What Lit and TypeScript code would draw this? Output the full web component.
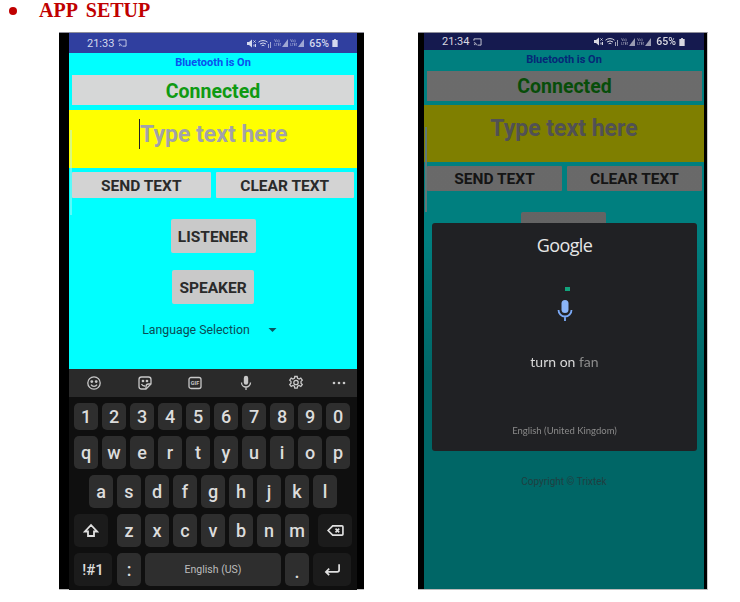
import { LitElement, html, css, svg } from "lit";
import { customElement, property } from "lit/decorators.js";

const castIcon = html`<svg class="cast" viewBox="0 0 10 9" width="9" height="8">
  <path d="M1 3V1h8v7H5M1 5.2A3 3 0 0 1 3.8 8M1 7a1 1 0 0 1 1 1" fill="none" stroke="currentColor" stroke-width="1"/>
</svg>`;

const muteIcon = html`<svg viewBox="0 0 9 9" width="9" height="9">
  <path d="M0 3h2l3-2.5v8L2 6H0z" fill="currentColor"/>
  <path d="M6.500 1.500 8.500 3.500M8.500 1.500 6.500 3.500M7 5.500v2M8.500 5v3" stroke="currentColor" stroke-width="1"/>
</svg>`;

const wifiIcon = html`<svg viewBox="0 0 14 9" width="14" height="9">
  <path d="M.5 3.200a7 7 0 0 1 9 0M2 5a5 5 0 0 1 6 0M3.600 6.700a2.400 2.400 0 0 1 2.800 0" fill="none" stroke="currentColor" stroke-width="1"/>
  <path d="M10 5h1v4h-1zM12 3h1v6h-1z" fill="currentColor" opacity=".7"/>
</svg>`;

const signalIcon = html`<span class="sig"><span class="volte">Vo)<br />LTE1</span>
  <svg viewBox="0 0 6 8" width="6" height="8"><path d="M6 0v8H0z" fill="currentColor" opacity=".8"/></svg></span>`;

const batteryIcon = html`<svg viewBox="0 0 6 9" width="6" height="8">
  <path d="M2 0h2v1h2v8H0V1h2z" fill="currentColor"/>
</svg>`;

const statusRight = html`<span class="status-right">
  ${muteIcon}${wifiIcon}${signalIcon}${signalIcon}<span class="pct">65%</span>${batteryIcon}
</span>`;

const toolbarIcons = [
  svg`<circle cx="8" cy="8" r="6.200"/><circle cx="5.800" cy="6.600" r=".8" fill="currentColor"/><circle cx="10.200" cy="6.600" r=".8" fill="currentColor"/><path d="M5 9.600a3.400 3.400 0 0 0 6 0"/>`,
  svg`<path d="M4.500 2h7A2.500 2.500 0 0 1 14 4.500V9l-5 5H4.500A2.500 2.500 0 0 1 2 11.500v-7A2.500 2.500 0 0 1 4.500 2z"/><path d="M9 14v-2.500A2.500 2.500 0 0 1 11.500 9H14"/><path d="M4.500 9a3.500 3.500 0 0 0 3.500 2"/><circle cx="6" cy="6" r=".7" fill="currentColor"/><circle cx="10" cy="6" r=".7" fill="currentColor"/>`,
  svg`<rect x="2" y="2.500" width="12" height="11" rx="2"/><text x="8" y="9.800" text-anchor="middle" font-size="5.500" font-weight="700" fill="currentColor" stroke="none">GIF</text>`,
  svg`<rect x="5.800" y=".8" width="4.400" height="9" rx="2.200" fill="currentColor" stroke="none"/><path d="M3.500 7.500a4.500 4.500 0 0 0 9 0M8 12v3"/>`,
  svg`<path d="M6.800 1.500h2.400l.4 1.900 1.500.7 1.700-1 1.500 2-1.300 1.300v1.800l1.300 1.300-1.500 2-1.700-1-1.500.7-.4 1.900H6.800l-.4-1.900-1.500-.7-1.700 1-1.500-2L3 8.200V6.400L1.700 5.100l1.500-2 1.700 1 1.500-.7z"/><circle cx="8" cy="7.500" r="2.200"/>`,
  svg`<circle cx="3" cy="8" r="1.300" fill="currentColor" stroke="none"/><circle cx="8" cy="8" r="1.300" fill="currentColor" stroke="none"/><circle cx="13" cy="8" r="1.300" fill="currentColor" stroke="none"/>`,
];

@customElement("phone-keyboard")
export class PhoneKeyboard extends LitElement {
  static styles = css`
    :host {
      display: block;
      font-family: Roboto, sans-serif;
    }

    .toolbar {
      height: 28px;
      background: #2a2a2a;
      color: #c9c9c9;
      display: grid;
      grid-template-columns: 50px 51px 50px 52px 48px 37px;
      align-items: center;
      justify-items: center;
    }

    .toolbar svg {
      width: 16px;
      height: 16px;
      fill: none;
      stroke: currentColor;
      stroke-width: 1.3;
    }

    .keys {
      background: #0f0f0f;
      height: 193px;
      box-sizing: border-box;
      padding: 6px 6px 0 5px;
      display: flex;
      flex-direction: column;
      gap: 6px;
    }

    .row {
      display: flex;
      gap: 4px;
      height: 33px;
    }

    .row.numbers {
      height: 27px;
    }

    .row.home {
      padding-left: 15px;
    }

    .key {
      flex: 0 0 24px;
      background: #2e2e2e;
      border-radius: 5px;
      color: #dcdcdc;
      font-size: 18px;
      font-weight: 500;
      display: flex;
      align-items: center;
      justify-content: center;
    }

    .key.dark {
      background: #1b1b1b;
    }

    .shift {
      flex-basis: 34px;
      margin-right: 5px;
    }

    .back {
      flex-basis: 34px;
      margin-left: 5px;
    }

    .sym {
      flex-basis: 38px;
      font-size: 15px;
      margin-right: 1px;
    }

    .space {
      flex-basis: 136px;
      font-size: 10.5px;
      font-weight: 400;
      color: #bdbdbd;
    }

    .enter {
      flex-basis: 38px;
    }

    .dot {
      align-items: flex-end;
      padding-bottom: 4px;
      box-sizing: border-box;
    }

    .key svg {
      fill: none;
      stroke: #e0e0e0;
      stroke-width: 1.8;
    }
  `;

  render() {
    const row = (chars: string) =>
      [...chars].map((c) => html`<div class="key">${c}</div>`);
    return html`
      <div class="toolbar">
        ${toolbarIcons.map((i) => html`<svg viewBox="0 0 16 16">${i}</svg>`)}
      </div>
      <div class="keys">
        <div class="row numbers">${row("1234567890")}</div>
        <div class="row">${row("qwertyuiop")}</div>
        <div class="row home">${row("asdfghjkl")}</div>
        <div class="row">
          <div class="key dark shift">
            <svg viewBox="0 0 16 16" width="16" height="16"><path d="M8 2 2 8.500h3V13h6V8.500h3z" /></svg>
          </div>
          ${row("zxcvbnm")}
          <div class="key dark back">
            <svg viewBox="0 0 18 14" width="17" height="13">
              <path d="M6 2h10a1 1 0 0 1 1 1v8a1 1 0 0 1-1 1H6L1 7z" />
              <path d="m9 5 4 4m0-4-4 4" />
            </svg>
          </div>
        </div>
        <div class="row">
          <div class="key dark sym">!#1</div>
          <div class="key">:</div>
          <div class="key space">English (US)</div>
          <div class="key dot">.</div>
          <div class="key dark enter">
            <svg viewBox="0 0 18 14" width="17" height="14"><path d="M16 1v6a2 2 0 0 1-2 2H2m3.500-3.500L2 9l3.500 3.500" /></svg>
          </div>
        </div>
      </div>
    `;
  }
}

@customElement("app-root")
export class AppRoot extends LitElement {
  @property() title = "APP SETUP";

  static styles = css`
    :host {
      display: block;
      height: 602px;
      background: #fff;
      overflow: hidden;
    }

    .heading {
      height: 32px;
      box-sizing: border-box;
      padding: 0 0 0 9px;
      display: flex;
      align-items: flex-start;
      gap: 22px;
      color: #c00000;
      font: bold 20px/21px "Liberation Serif", serif;
      word-spacing: 4px;
    }

    .bullet {
      width: 8px;
      height: 8px;
      border-radius: 50%;
      background: #c00000;
      margin-top: 7px;
    }

    .phones {
      display: flex;
      gap: 54px;
      padding-left: 59px;
      filter: blur(0.5px);
    }

    .phone {
      height: 558px;
      background: #000;
      border-top: 1px solid #8f8f9a;
      border-bottom: 1px solid #bbb;
      box-sizing: border-box;
      display: flex;
      font-family: Roboto, sans-serif;
    }

    .first {
      width: 305px;
      padding: 0 7px 0 10px;
    }

    .second {
      width: 290px;
      padding: 0 3px 0 6px;
      border-right: 1px solid #ccc;
    }

    .screen {
      flex: 1;
      display: flex;
      flex-direction: column;
      min-width: 0;
    }

    .status {
      flex: none;
      height: 20px;
      background: #303f9f;
      color: #d5d9ee;
      font-size: 11px;
      display: flex;
      align-items: center;
      box-sizing: border-box;
      padding: 0 19px 0 18px;
      gap: 4px;
    }

    .second .status {
      height: 17px;
      background: #151a4f;
      color: #d8d8e0;
    }

    .status-right {
      margin-left: auto;
      display: flex;
      align-items: center;
      gap: 2px;
    }

    .sig {
      display: flex;
      align-items: flex-end;
      width: 14px;
      gap: 1px;
      opacity: 0.85;
    }

    .volte {
      font-size: 3.500px;
      line-height: 4px;
      width: 7px;
      overflow: hidden;
      white-space: nowrap;
    }

    .pct {
      margin: 0 1px 0 3px;
      font-weight: 500;
      font-size: 10.500px;
    }

    .content {
      flex: 1;
      min-height: 0;
      background: #00ffff;
      position: relative;
      display: flex;
      flex-direction: column;
      align-items: center;
    }

    .first .content {
      flex: none;
      height: 316px;
    }

    .bt {
      height: 22px;
      line-height: 20px;
      font-size: 11px;
      font-weight: 700;
      color: #0a50ee;
    }

    .conn {
      align-self: stretch;
      margin: 0 3px;
      height: 30px;
      background: #d6d7d7;
      color: #0f9a12;
      font-size: 19.500px;
      font-weight: 700;
      line-height: 33px;
      text-align: center;
    }

    .input {
      align-self: stretch;
      height: 58px;
      margin-top: 5px;
      background: #ffff00;
      color: #a2a2a8;
      font-size: 23px;
      font-weight: 700;
      display: flex;
      justify-content: center;
      padding-top: 9px;
      box-sizing: border-box;
      line-height: 31px;
    }

    .caret {
      width: 1.500px;
      height: 30px;
      background: #222;
    }

    .pair {
      align-self: stretch;
      display: flex;
      gap: 5px;
      margin: 4px 3px 0;
    }

    .pair .btn {
      flex: 1;
      height: 26px;
      line-height: 28px;
    }

    .btn {
      background: #d3d3d3;
      color: #2a2a2a;
      font-size: 15.500px;
      font-weight: 700;
      text-align: center;
      border-radius: 1px;
    }

    .solo {
      height: 34px;
      line-height: 36px;
      border-radius: 2px;
      background: #c9c9c9;
    }

    .listener {
      width: 85px;
      margin-top: 21px;
    }

    .speaker {
      width: 82px;
      margin-top: 17px;
    }

    .lang {
      margin-top: 18px;
      font-size: 12.300px;
      line-height: 16px;
      color: #0a4b55;
      display: flex;
      align-items: center;
      gap: 19px;
      transform: translateX(-3.500px);
    }

    .tri {
      width: 0;
      height: 0;
      border: 4px solid transparent;
      border-top: 4px solid #0a5560;
      border-bottom: 0;
    }

    .handle {
      position: absolute;
      left: 1px;
      top: 77px;
      width: 1.500px;
      height: 85px;
      background: #bfeff0;
    }

    .first .handle {
      background: #b4f5f5;
      opacity: 0.5;
    }

    .copy {
      margin-top: auto;
      margin-bottom: 102px;
      font-size: 10px;
      color: #4a9ea2;
    }

    /* the second shot is the same form, slightly tighter */
    .second .bt {
      height: 21px;
    }

    .second .conn {
      margin-right: 2px;
      line-height: 32px;
    }

    .second .input {
      margin-top: 4px;
      height: 57px;
      padding-top: 8px;
    }

    .second .pair {
      margin-right: 2px;
    }

    .second .pair .btn {
      height: 25px;
      line-height: 26px;
    }

    .second .listener {
      transform: translateX(-1px);
    }

    .shade {
      position: absolute;
      inset: 0;
      background: linear-gradient(
        rgba(0, 0, 0, 0.5),
        rgba(0, 0, 0, 0.5) 35%,
        rgba(0, 0, 0, 0.6) 60%
      );
    }

    .dialog {
      position: absolute;
      left: 8px;
      right: 7px;
      top: 173px;
      height: 228px;
      background: #202124;
      border-radius: 3px;
      display: flex;
      flex-direction: column;
      align-items: center;
      font-family: Lato, sans-serif;
    }

    .google {
      margin-top: 9px;
      font: 18px/26px "Open Sans", sans-serif;
      color: #e6e6e6;
      letter-spacing: -0.6px;
    }

    .dot {
      width: 5px;
      height: 4px;
      margin: 29px 0 0 5px;
      background: #12a37c;
    }

    .mic {
      margin-top: 8px;
    }

    .said {
      margin-top: 32px;
      font-size: 14px;
      line-height: 18px;
      color: #d8d8d8;
    }

    .said span {
      color: #8c8c8c;
    }

    .locale {
      margin-top: auto;
      margin-bottom: 15px;
      font-size: 9.500px;
      color: #8a8a8a;
    }
  `;

  render() {
    return html`
      <div class="heading"><span class="bullet"></span>${this.title}</div>
      <div class="phones">
        <div class="phone first">
          <div class="screen">
            <div class="status">21:33 ${castIcon} ${statusRight}</div>
            <div class="content">
              <div class="bt">Bluetooth is On</div>
              <div class="conn">Connected</div>
              <div class="input"><span class="caret"></span>Type text here</div>
              <div class="pair">
                <div class="btn">SEND TEXT</div>
                <div class="btn">CLEAR TEXT</div>
              </div>
              <div class="btn solo listener">LISTENER</div>
              <div class="btn solo speaker">SPEAKER</div>
              <div class="lang">Language Selection <span class="tri"></span></div>
              <div class="handle"></div>
            </div>
            <phone-keyboard></phone-keyboard>
          </div>
        </div>
        <div class="phone second">
          <div class="screen">
            <div class="status">21:34 ${castIcon} ${statusRight}</div>
            <div class="content">
              <div class="bt">Bluetooth is On</div>
              <div class="conn">Connected</div>
              <div class="input">Type text here</div>
              <div class="pair">
                <div class="btn">SEND TEXT</div>
                <div class="btn">CLEAR TEXT</div>
              </div>
              <div class="btn solo listener"></div>
              <div class="handle"></div>
              <div class="copy">Copyright © Trixtek</div>
              <div class="shade"></div>
              <div class="dialog">
                <div class="google">Google</div>
                <div class="dot"></div>
                <svg class="mic" viewBox="0 0 16 22" width="16" height="22">
                  <rect x="4.500" y="1" width="7" height="13" rx="3.500" fill="#8ab4f8" />
                  <path d="M1.500 11a6.500 6.500 0 0 0 13 0M8 17.500V22" fill="none" stroke="#7baaf7" stroke-width="1.800" />
                </svg>
                <div class="said">turn on <span>fan</span></div>
                <div class="locale">English (United Kingdom)</div>
              </div>
            </div>
          </div>
        </div>
      </div>
    `;
  }
}
